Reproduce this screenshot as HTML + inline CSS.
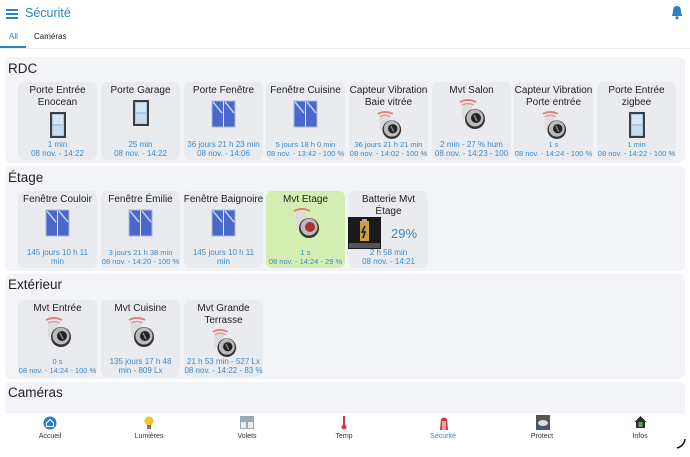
<!DOCTYPE html>
<html><head><meta charset="utf-8"><style>
*{margin:0;padding:0;box-sizing:border-box}
body{width:690px;height:457px;background:#fff;font-family:"Liberation Sans",sans-serif;position:relative;overflow:hidden;color:#222}
.a{position:absolute}
.panel{position:absolute;left:5px;width:680px;background:#f3f4f7;border-radius:6px}
.sec{position:absolute;left:8px;font-size:13.5px;color:#222}
.card{position:absolute;width:79px;background:#e9ebef;border-radius:6px;display:flex;flex-direction:column;align-items:center;padding-top:3px;padding-bottom:2px}
.t{font-size:10px;line-height:12px;text-align:center;color:#222;white-space:nowrap}
.s{margin-top:auto;font-size:8px;line-height:9px;text-align:center;color:#3d8ac7;white-space:nowrap}
.ic{margin-top:2px;flex:none}
.nav{position:absolute;top:414px;font-size:7px;color:#333;text-align:center;width:60px}
</style></head><body>
<svg width="0" height="0" style="position:absolute">
<defs>
<g id="door"><rect x="4" y="1" width="16" height="26" fill="#3b3f44"/><rect x="6" y="3" width="12" height="22" fill="#aec8dd"/><rect x="7" y="4" width="10" height="9" fill="#d5e6f2"/><rect x="7" y="15" width="10" height="9" fill="#c6dbeb"/></g>
<g id="win"><rect x="2" y="2" width="11" height="26" fill="#4a68c9"/><rect x="14" y="2" width="11" height="26" fill="#4a68c9"/><path d="M3 3 L12 14 M15 3 L24 14" stroke="#c4d2f2" stroke-width="1.5"/><rect x="2" y="2" width="23" height="26" fill="none" stroke="#aab8e0"/></g>
<g id="mvt"><rect x="5" y="4" width="10" height="16" fill="#ddd"/><path d="M3 3 Q11 -1 19 3" stroke="#e08080" stroke-width="2" fill="none"/><path d="M5 6 Q11 3 17 6" stroke="#e39a9a" stroke-width="1.5" fill="none"/><circle cx="18" cy="20" r="10" fill="#333"/><circle cx="18" cy="19" r="8.5" fill="#bbb"/><circle cx="19" cy="19" r="5" fill="#222"/><path d="M17 16 L20 22" stroke="#888" stroke-width="1.5"/></g>
<g id="mvtr"><rect x="5" y="4" width="10" height="16" fill="#ddd"/><path d="M3 3 Q11 -1 19 3" stroke="#e08080" stroke-width="2" fill="none"/><circle cx="18" cy="20" r="10" fill="#333"/><circle cx="18" cy="19" r="8.5" fill="#bbb"/><circle cx="19" cy="19" r="5" fill="#a33"/></g>
</defs></svg>

<div class="a" style="left:6px;top:9px;width:12px;height:2px;background:#2e7fc4;box-shadow:0 4px 0 #2e7fc4,0 8px 0 #2e7fc4"></div>
<div class="a" style="left:25px;top:6px;font-size:12.5px;color:#2e7fc4">Sécurité</div>
<svg class="a" style="left:670px;top:5px" width="14" height="15" viewBox="0 0 14 15"><path d="M7 1 C3.5 1 3 4 3 7 L2 11 H12 L11 7 C11 4 10.5 1 7 1Z" fill="#2e7fc4"/><circle cx="7" cy="12.8" r="1.6" fill="#2e7fc4"/></svg>
<div class="a" style="left:9px;top:32px;font-size:8px;color:#2e7fc4">All</div>
<div class="a" style="left:34px;top:32px;font-size:8px;color:#222">Caméras</div>
<div class="a" style="left:0;top:46px;width:26px;height:2px;background:#2e7fc4"></div>
<div class="a" style="left:0;top:48px;width:690px;height:1px;background:#eee"></div>

<div class="panel" style="top:57px;height:106px"></div>
<div class="sec" style="top:61px">RDC</div>
<div class="card" style="left:18px;top:82px;height:78px"><div class="t">Porte Entrée<br>Enocean</div><svg class="ic" width="24" height="28"><use href="#door"/></svg><div class="s">1 min<br>08 nov. - 14:22</div></div>
<div class="card" style="left:101px;top:82px;height:78px"><div class="t">Porte Garage</div><svg class="ic" width="24" height="28"><use href="#door"/></svg><div class="s">25 min<br>08 nov. - 14:22</div></div>
<div class="card" style="left:184px;top:82px;height:78px"><div class="t">Porte Fenêtre</div><svg class="ic" width="27" height="30"><use href="#win"/></svg><div class="s">36 jours 21 h 23 min<br>08 nov. - 14:06</div></div>
<div class="card" style="left:266px;top:82px;height:78px"><div class="t">Fenêtre Cuisine</div><svg class="ic" width="27" height="30"><use href="#win"/></svg><div class="s" style="font-size:7.5px">5 jours 18 h 0 min<br>08 nov. - 13:42 - 100 %</div></div>
<div class="card" style="left:349px;top:82px;height:78px"><div class="t">Capteur Vibration<br>Baie vitrée</div><svg class="ic" width="28" height="28" viewBox="0 0 30 30"><use href="#mvt"/></svg><div class="s" style="font-size:7.5px">36 jours 21 h 21 min<br>08 nov. - 14:02 - 100 %</div></div>
<div class="card" style="left:432px;top:82px;height:78px"><div class="t">Mvt Salon</div><svg class="ic" width="30" height="30"><use href="#mvt"/></svg><div class="s">2 min - 27 % hum<br>08 nov. - 14:23 - 100</div></div>
<div class="card" style="left:514px;top:82px;height:78px"><div class="t">Capteur Vibration<br>Porte entrée</div><svg class="ic" width="28" height="28" viewBox="0 0 30 30"><use href="#mvt"/></svg><div class="s" style="font-size:7.5px">1 s<br>08 nov. - 14:24 - 100 %</div></div>
<div class="card" style="left:597px;top:82px;height:78px"><div class="t">Porte Entrée<br>zigbee</div><svg class="ic" width="24" height="28"><use href="#door"/></svg><div class="s" style="font-size:7.5px">1 min<br>08 nov. - 14:22 - 100 %</div></div>

<div class="panel" style="top:166px;height:105px"></div>
<div class="sec" style="top:170px">Étage</div>
<div class="card" style="left:18px;top:191px;height:77px"><div class="t">Fenêtre Couloir</div><svg class="ic" width="27" height="30"><use href="#win"/></svg><div class="s">145 jours 10 h 11<br>min</div></div>
<div class="card" style="left:101px;top:191px;height:77px"><div class="t">Fenêtre Émilie</div><svg class="ic" width="27" height="30"><use href="#win"/></svg><div class="s" style="font-size:7.5px">3 jours 21 h 38 min<br>08 nov. - 14:20 - 100 %</div></div>
<div class="card" style="left:184px;top:191px;height:77px"><div class="t">Fenêtre Baignoire</div><svg class="ic" width="27" height="30"><use href="#win"/></svg><div class="s">145 jours 10 h 11<br>min</div></div>
<div class="card" style="left:266px;top:191px;height:77px;background:#d3eeb0"><div class="t">Mvt Etage</div><svg class="ic" width="30" height="30"><use href="#mvtr"/></svg><div class="s" style="font-size:7.5px">1 s<br>08 nov. - 14:24 - 29 %</div></div>
<div class="card" style="left:349px;top:191px;height:77px"><div class="t">Batterie Mvt<br>Étage</div><div class="s">2 h 58 min<br>08 nov. - 14:21</div></div>
<svg class="a" style="left:348px;top:217px" width="33" height="32"><rect width="33" height="32" fill="#1a1a1a"/><rect x="12" y="4" width="9" height="20" fill="#c8a040"/><rect x="14" y="2" width="5" height="3" fill="#aaa"/><path d="M17 9 L14 15 H17 L15 21" stroke="#111" stroke-width="1.5" fill="none"/><rect x="1" y="26" width="31" height="5" fill="#555"/></svg>
<div class="a" style="left:391px;top:226px;font-size:13px;color:#3d8ac7">29%</div>

<div class="panel" style="top:274px;height:105px"></div>
<div class="sec" style="top:277px">Extérieur</div>
<div class="card" style="left:18px;top:300px;height:77px"><div class="t">Mvt Entrée</div><svg class="ic" width="30" height="30"><use href="#mvt"/></svg><div class="s" style="font-size:7.5px">0 s<br>08 nov. - 14:24 - 100 %</div></div>
<div class="card" style="left:101px;top:300px;height:77px"><div class="t">Mvt Cuisine</div><svg class="ic" width="30" height="30"><use href="#mvt"/></svg><div class="s">135 jours 17 h 48<br>min - 809 Lx</div></div>
<div class="card" style="left:184px;top:300px;height:77px"><div class="t">Mvt Grande<br>Terrasse</div><svg class="ic" width="28" height="28" viewBox="0 0 30 30"><use href="#mvt"/></svg><div class="s">21 h 53 min - 527 Lx<br>08 nov. - 14:22 - 83 %</div></div>

<div class="panel" style="top:382px;height:40px"></div>
<div class="sec" style="top:385px">Caméras</div>

<div class="a" style="left:0;top:413px;width:690px;height:44px;background:#fff"></div>
<svg class="a" style="left:43px;top:416px" width="14" height="14"><circle cx="7" cy="7" r="6.5" fill="#2e7fc4"/><path d="M3.5 7 L7 3.5 L10.5 7 V10.5 H3.5Z" fill="none" stroke="#fff"/></svg>
<svg class="a" style="left:143px;top:416px" width="12" height="14"><circle cx="6" cy="5" r="4.5" fill="#f2c233"/><rect x="4" y="9" width="4" height="4" fill="#777"/></svg>
<svg class="a" style="left:240px;top:416px" width="14" height="13"><rect width="14" height="13" fill="#9aa9ba"/><rect x="1" y="6" width="5" height="6" fill="#e8eef4"/><rect x="8" y="6" width="5" height="6" fill="#e8eef4"/></svg>
<svg class="a" style="left:341px;top:416px" width="6" height="14"><rect x="2" y="0" width="2" height="10" fill="#d33"/><circle cx="3" cy="11" r="2.5" fill="#d33"/></svg>
<svg class="a" style="left:438px;top:416px" width="12" height="14"><path d="M2 14 L3 3 Q6 0 9 3 L10 14Z" fill="#c8383a"/><rect x="4" y="5" width="4" height="9" fill="#f0a0a0"/></svg>
<svg class="a" style="left:536px;top:415px" width="14" height="15"><rect width="14" height="15" fill="#555"/><ellipse cx="7" cy="8" rx="5" ry="3" fill="#ddd"/><rect y="12" width="14" height="3" fill="#3a5a80"/></svg>
<svg class="a" style="left:634px;top:415px" width="13" height="14"><path d="M6.5 1 L12.5 7 H11 V13 H2 V7 H0.5Z" fill="#2d2d2d"/><rect x="4.5" y="7" width="4" height="5" fill="#4caf50"/></svg>
<div class="nav" style="left:20px;top:433px">Accueil</div>
<div class="nav" style="left:119px;top:433px">Lumières</div>
<div class="nav" style="left:217px;top:433px">Volets</div>
<div class="nav" style="left:314px;top:433px">Temp</div>
<div class="nav" style="left:413px;top:433px;color:#3d8ac7">Sécurité</div>
<div class="nav" style="left:512px;top:433px">Protect</div>
<div class="nav" style="left:610px;top:433px">Infos</div>
<svg class="a" style="left:675px;top:438px" width="12" height="12"><path d="M10 1 Q9 8 2 10" stroke="#111" stroke-width="1.5" fill="none"/></svg>
</body></html>
